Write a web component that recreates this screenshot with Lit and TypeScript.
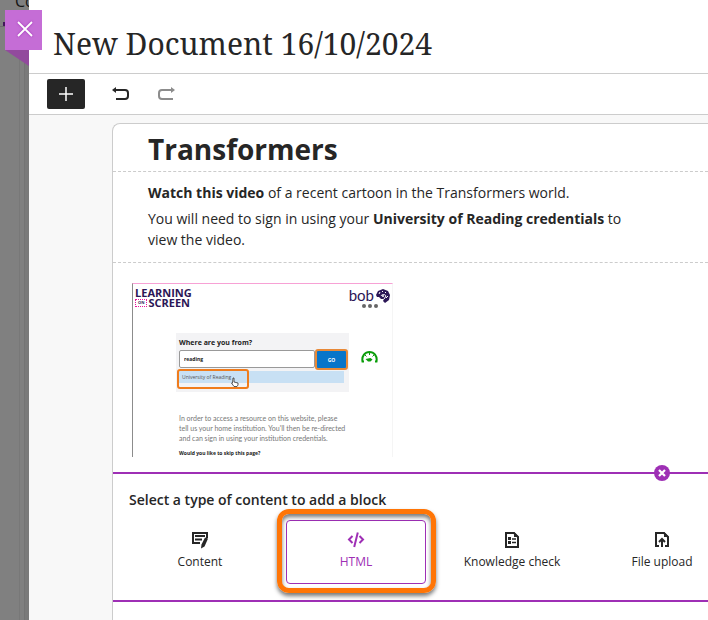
import { LitElement, html, css, svg } from "lit";
import { customElement } from "lit/decorators.js";
import { classMap } from "lit/directives/class-map.js";

const icons = {
  content: svg`<path d="M16 7V2H2v10h7M4 5h10M4 8.500h7" fill="none" stroke="currentColor" stroke-width="2"/><path d="M14 6.500l3 1-3.500 8-3.500 2 .5-4z" fill="currentColor"/>`,
  html: svg`<path d="M5.500 5L2 8.500 5.500 12M12.500 5L16 8.500 12.500 12M10.800 1.500L7.200 16" fill="none" stroke="currentColor" stroke-width="2"/>`,
  check: svg`<path d="M3 2h8l4 4v10H3z" fill="none" stroke="currentColor" stroke-width="2"/><path d="M11 1l5 5h-5zM5 6h3v3H5zM5 10h3v3H5z" fill="currentColor"/><path d="M9 8h4M9 11.500h4" stroke="currentColor" stroke-width="1.500"/>`,
  upload: svg`<path d="M6 15H3V2h8l4 4v9h-3M9 16V9M6 11l3-3 3 3" fill="none" stroke="currentColor" stroke-width="2"/><path d="M11 1l5 5h-5z" fill="currentColor"/>`,
};

const blockTypes = [
  { label: "Content", icon: icons.content, active: false },
  { label: "HTML", icon: icons.html, active: true },
  { label: "Knowledge check", icon: icons.check, active: false },
  { label: "File upload", icon: icons.upload, active: false },
];

@customElement("video-preview")
class VideoPreview extends LitElement {
  static styles = css`
    :host {
      display: block;
      box-sizing: border-box;
      width: 261px;
      height: 174px;
      border: 1px solid #f5f5f5;
      border-top-color: #f7a1d5;
      border-left-color: #8c8c8c;
      border-bottom: 0;
      overflow: hidden;
      background: #fff;
      font-family: "Open Sans", sans-serif;
      color: #222;
    }
    .top {
      display: flex;
      justify-content: space-between;
      height: 49px;
      padding: 4px 2px 0;
      box-sizing: border-box;
    }
    .logo {
      font: 700 11px/10px "Open Sans", sans-serif;
      color: #2b1656;
    }
    .line {
      display: flex;
      align-items: center;
      gap: 1px;
    }
    .on {
      font-size: 4px;
      line-height: 6px;
      padding: 0 2px;
      border: 1px dotted #e6189b;
    }
    .bob {
      display: flex;
      flex-direction: column;
      align-items: flex-end;
    }
    .name {
      display: flex;
      align-items: center;
      gap: 2px;
      font: 400 15px/15px "Lato", sans-serif;
      color: #2b1656;
    }
    .dots {
      width: 18px;
      height: 6px;
      margin-right: 11px;
    }
    .middle {
      display: flex;
      align-items: flex-start;
      gap: 12px;
      padding-left: 43px;
    }
    .form {
      box-sizing: border-box;
      width: 173px;
      height: 59px;
      padding: 5px 3px;
      background: #f3f3f5;
    }
    .question {
      display: block;
      font: 700 7px/10px "Open Sans", sans-serif;
    }
    .row {
      display: flex;
      margin-top: 2px;
    }
    .field {
      box-sizing: border-box;
      flex: 1;
      min-width: 0;
      height: 18px;
      padding: 0 4px;
      border: 1px solid #999;
      border-radius: 2px;
      font: 700 5px/10px "Open Sans", sans-serif;
      color: #222;
      background: #fff;
    }
    .go {
      box-sizing: border-box;
      width: 33px;
      height: 21px;
      margin: -1px -2px 0 0;
      padding: 0;
      border: 2px solid #e88938;
      border-radius: 3px;
      background: #0875c9;
      color: #fff;
      font: 700 5px/10px "Open Sans", sans-serif;
    }
    .option {
      position: relative;
      width: 165px;
      height: 12px;
      margin-top: 1px;
      background: #c8e0f4;
      font: 5px/12px "Open Sans", sans-serif;
      color: #555;
      text-indent: 3px;
    }
    .ring {
      position: absolute;
      box-sizing: border-box;
      left: -2px;
      top: -2px;
      width: 72px;
      height: 20px;
      border: 2px solid #f07c1c;
      border-radius: 3px;
    }
    .hand {
      position: absolute;
      left: 52px;
      top: 6px;
      width: 8px;
      height: 10px;
    }
    .gauge {
      width: 17px;
      height: 14px;
      margin-top: 17px;
    }
    .copy {
      margin: 21px 0 0 46px;
      font: 7px/10px "Lato", sans-serif;
      color: #777;
      white-space: nowrap;
    }
    .skip {
      margin: 5px 0 0 46px;
      font: 700 5px/10px "Open Sans", sans-serif;
    }
  `;

  render() {
    return html`
      <div class="top">
        <div class="logo">
          <div>LEARNING</div>
          <div class="line"><span class="on">ON</span>SCREEN</div>
        </div>
        <div class="bob">
          <div class="name">
            bob
            <svg width="14" height="14" viewBox="0 0 14 14">
              <path d="M0 6L2 2l5-2 5 2 2 4-1 5-4 3-2-2 1-2H5L3 8H1z" fill="#2b1656" />
              <path d="M3 5l1-2M6 3l1-1M9 3l1 1M10 9l2-2M5 7c1-2 4-2 5 0l-2 3" fill="none" stroke="#fff" />
              <circle cx="7" cy="7" r="1" fill="#fff" />
            </svg>
          </div>
          <svg class="dots" viewBox="0 0 18 6" fill="#666">
            <circle cx="3" cy="3" r="2" /><circle cx="9" cy="3" r="2" /><circle cx="15" cy="3" r="2" />
          </svg>
        </div>
      </div>
      <div class="middle">
        <div class="form">
          <label class="question" for="place">Where are you from?</label>
          <div class="row">
            <input id="place" class="field" value="reading" />
            <button class="go">GO</button>
          </div>
          <div class="option">
            University of Reading
            <span class="ring"></span>
            <svg class="hand" viewBox="0 0 8 10">
              <path d="M2 1h1v4l4 1v2L6 9.500H3L.5 6h1z" fill="#fff" stroke="#333" stroke-width=".8" />
            </svg>
          </div>
        </div>
        <svg class="gauge" viewBox="0 0 17 14" fill="none" stroke="#0a9d0a">
          <path d="M3 11.500H1.500C.5 6 4 2 8.500 2s8 4 7 9.500H14" stroke-width="2" />
          <path d="M4 5l1.500 1.500M8.500 2v3M13 5l-1.500 1.500" />
          <path d="M4.500 9l5-1 2 1.500-2 2H7z" fill="#0a9d0a" stroke="none" />
        </svg>
      </div>
      <div class="copy">
        In order to access a resource on this website, please<br />
        tell us your home institution. You'll then be re-directed<br />
        and can sign in using your institution credentials.
      </div>
      <div class="skip">Would you like to skip this page?</div>
    `;
  }
}

@customElement("app-root")
class AppRoot extends LitElement {
  static styles = css`
    :host {
      display: flex;
      min-height: 100vh;
      overflow: hidden;
      position: relative;
      background: #808080;
      color: #262626;
      font: 14px/21px "Open Sans", sans-serif;
    }
    button {
      font: inherit;
      color: inherit;
      padding: 0;
      border: 0;
      background: none;
      display: flex;
      align-items: center;
      justify-content: center;
    }
    .behind {
      flex: 0 0 29px;
      display: flex;
      flex-direction: column;
      overflow: hidden;
      background: #808080;
    }
    .crumb {
      box-sizing: border-box;
      height: 27px;
      padding-left: 15px;
      font-size: 16px;
      line-height: 2px;
      color: #151515;
      background: linear-gradient(#42185a, #42185a) 3px 22px / 3px 4px no-repeat;
      border-bottom: 1px solid #6d6d6d;
      white-space: nowrap;
    }
    .gutter {
      flex: 1;
      width: 19px;
      border-right: 1px solid #787878;
      box-shadow: 4px 0 0 #808080, 5px 0 0 #747474, 9px 0 0 #7a7a7a;
    }
    .close {
      position: absolute;
      left: 5px;
      top: 10px;
      width: 37px;
      height: 40px;
      padding: 0 0 2px 2px;
      color: #fff;
      background: #c56dd6;
    }
    .close svg {
      filter: drop-shadow(0 0 1px #9e2fb5);
    }
    .fold {
      position: absolute;
      left: 5px;
      top: 50px;
      width: 24px;
      height: 16px;
      background: #924a9d;
      clip-path: polygon(0 0, 100% 0, 100% 100%);
    }
    .panel {
      flex: 1;
      min-width: 0;
      display: flex;
      flex-direction: column;
      background: #f8f8f8;
    }
    .title {
      box-sizing: border-box;
      height: 74px;
      margin: 0;
      padding: 24px 24px 0;
      border-bottom: 1px solid #ccc;
      background: #fff;
      font: 400 30px/40px "Noto Serif", "DejaVu Serif Condensed", "DejaVu Serif", serif;
      white-space: nowrap;
    }
    .toolbar {
      box-sizing: border-box;
      height: 41px;
      display: flex;
      align-items: center;
      gap: 27px;
      padding-left: 18px;
      border-bottom: 1px solid #ccc;
      background: #fff;
    }
    .add {
      width: 38px;
      height: 30px;
      border-radius: 2px;
      background: #262626;
      color: #fff;
    }
    .redo {
      color: #8c8c8c;
    }
    .page {
      flex: 1;
      margin: 8px 0 0 83px;
      border: 1px solid #ccc;
      border-width: 1px 0 0 1px;
      border-radius: 8px 0 0 0;
      background: #fff;
    }
    .heading {
      margin: 0;
      padding: 5px 0 2px 35px;
      font-size: 28px;
      line-height: 40px;
      font-weight: 700;
      border-bottom: 1px dashed #ccc;
    }
    .text {
      padding: 10px 35px 12px;
      border-bottom: 1px dashed #ccc;
    }
    .text p {
      margin: 0;
      max-width: 490px;
    }
    .text p + p {
      margin-top: 5px;
    }
    .media {
      padding: 20px 19px 15px;
    }
    .picker {
      position: relative;
      border: 2px solid #9e2fb5;
      border-width: 2px 0;
      padding: 15px 16px;
    }
    .dismiss {
      position: absolute;
      right: 38px;
      top: -9px;
      width: 16px;
      height: 16px;
      border-radius: 50%;
      background: #9e2fb5;
      color: #fff;
    }
    .prompt {
      margin: 0;
      font-size: 14px;
      line-height: 22px;
      font-weight: 600;
    }
    .types {
      display: flex;
      gap: 16px;
      margin: 9px 0 1px 1px;
    }
    .type {
      position: relative;
      box-sizing: border-box;
      flex: 0 0 140px;
      height: 64px;
      flex-direction: column;
      gap: 4px;
      border: 1px solid transparent;
      border-radius: 4px;
      padding-bottom: 2px;
      font-size: 12px;
      line-height: 18px;
      white-space: nowrap;
    }
    .type:last-child {
      flex-basis: 128px;
    }
    .type.active {
      color: #9e2fb5;
      border-color: #9e2fb5;
    }
    .callout {
      position: absolute;
      inset: -12px -11px -10px -10px;
      border: 5px solid #ff7506;
      border-radius: 12px;
      box-shadow: 0 3px 4px #0008, inset 0 3px 4px #0008;
      pointer-events: none;
    }
  `;

  render() {
    return html`
      <div class="behind">
        <div class="crumb">Co</div>
        <div class="gutter"></div>
      </div>
      <main class="panel">
        <h1 class="title">New Document 16/10/2024</h1>
        <div class="toolbar">
          <button class="add" aria-label="Add block">
            <svg width="14" height="14" viewBox="0 0 14 14"><path d="M7 0v14M0 7h14" stroke="currentColor" stroke-width="1.500" /></svg>
          </button>
          <button class="undo" aria-label="Undo">
            <svg width="18" height="16" viewBox="0 0 18 16">
              <path d="M2 4h11q3 0 3 3v3q0 3-3 3H4" fill="none" stroke="currentColor" stroke-width="2" />
              <path d="M0 4l4-3v6z" fill="currentColor" />
            </svg>
          </button>
          <button class="redo" aria-label="Redo" disabled>
            <svg width="18" height="16" viewBox="0 0 18 16">
              <path d="M16 4H5q-3 0-3 3v3q0 3 3 3h11" fill="none" stroke="currentColor" stroke-width="2" />
              <path d="M18 4l-4-3v6z" fill="currentColor" />
            </svg>
          </button>
        </div>
        <article class="page">
          <h2 class="heading">Transformers</h2>
          <div class="text">
            <p><strong>Watch this video</strong> of a recent cartoon in the Transformers world.</p>
            <p>You will need to sign in using your <strong>University of Reading credentials</strong> to view the video.</p>
          </div>
          <div class="media"><video-preview></video-preview></div>
          <section class="picker">
            <button class="dismiss" aria-label="Cancel">
              <svg width="8" height="8" viewBox="0 0 8 8"><path d="M1 1l6 6M7 1L1 7" stroke="currentColor" stroke-width="2.200" /></svg>
            </button>
            <h3 class="prompt">Select a type of content to add a block</h3>
            <div class="types">
              ${blockTypes.map(
                (type) => html`
                  <button class=${classMap({ type: true, active: type.active })}>
                    <svg width="18" height="18" viewBox="0 0 18 18">${type.icon}</svg>
                    ${type.label}
                    ${type.active ? html`<span class="callout"></span>` : ""}
                  </button>
                `
              )}
            </div>
          </section>
        </article>
      </main>
      <span class="fold"></span>
      <button class="close" aria-label="Close">
        <svg width="16" height="16" viewBox="0 0 16 16"><path d="M1 1l14 14M15 1L1 15" stroke="currentColor" stroke-width="1.800" /></svg>
      </button>
    `;
  }
}
